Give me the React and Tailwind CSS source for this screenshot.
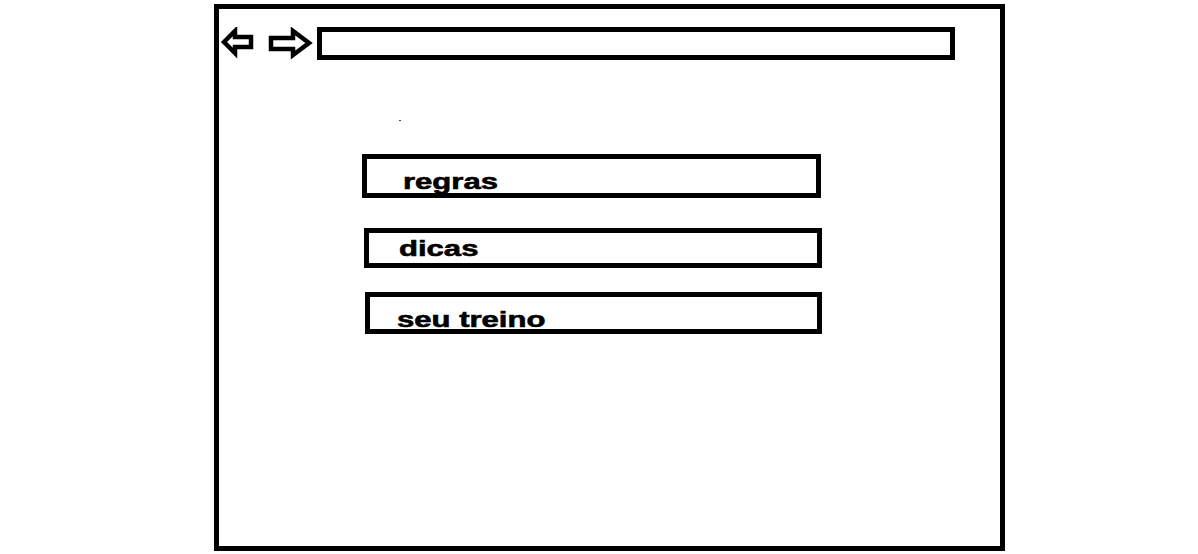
function BackArrow() {
  return (
    <svg width="46" height="33" viewBox="0 0 46 33" className="shrink-0">
      <polygon
        points="5,15 16,4 16,10 32,10 32,20 16,20 16,26"
        fill="none"
        stroke="black"
        strokeWidth="4.5"
        strokeLinejoin="miter"
      />
    </svg>
  );
}

function ForwardArrow() {
  return (
    <svg width="52" height="33" viewBox="0 0 52 33" className="shrink-0">
      <polygon
        points="6,11 28,11 28,4 44,16 28,28 28,22 6,22"
        fill="none"
        stroke="black"
        strokeWidth="4.5"
        strokeLinejoin="miter"
      />
    </svg>
  );
}

function MenuBox({ label, className }) {
  return (
    <div className={`border-[5px] border-black ${className}`}>
      <span className="inline-block origin-left scale-x-[1.38] font-['Liberation_Sans',Arial,sans-serif] text-[22.5px] leading-[22px] font-bold text-black [-webkit-text-stroke:0.6px_black]">
        {label}
      </span>
    </div>
  );
}

export default function App() {
  return (
    <div className="w-[1198px] h-[554px] bg-white overflow-hidden">
      <div className="ml-[214px] mt-[4px] w-[791px] h-[547px] border-[5px] border-black">
        {/* top bar */}
        <div className="flex items-start mt-[18px]">
          <BackArrow />
          <ForwardArrow />
          <div className="w-[638px] h-[33px] border-[5px] border-black" />
        </div>

        <div className="ml-[180px] mt-[60px] w-[2px] h-[1px] bg-gray-700" />

        {/* menu */}
        <MenuBox label="regras" className="ml-[143px] mt-[33px] w-[459px] h-[44px] pl-[36px] pt-[12px]" />
        <MenuBox label="dicas" className="ml-[145px] mt-[30px] w-[458px] h-[40px] pl-[30px] pt-[5px]" />
        <MenuBox label="seu treino" className="ml-[146px] mt-[24px] w-[457px] h-[42px] pl-[27px] pt-[12px]" />
      </div>
    </div>
  );
}
